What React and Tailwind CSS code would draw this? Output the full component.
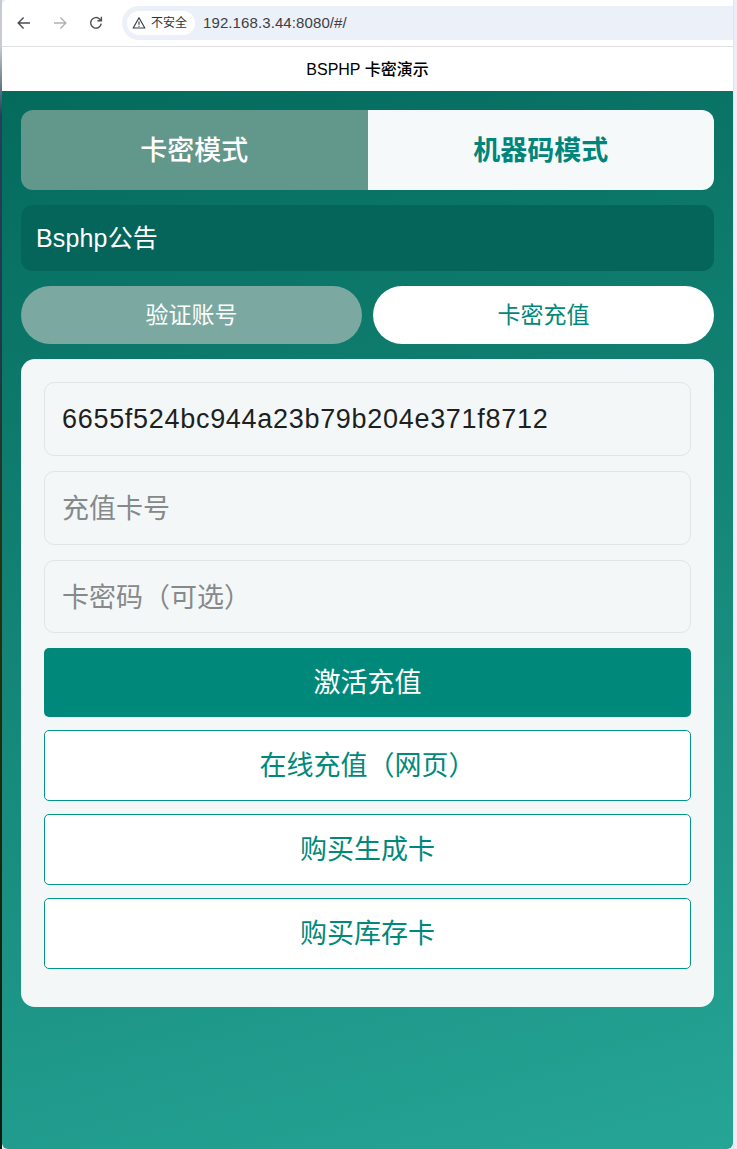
import React from "react";

const stack = "font-['Liberation_Sans','Noto_Sans_CJK_SC',sans-serif]";

function Back() {
  return (
    <svg width="16" height="16" viewBox="0 0 16 16" fill="none" stroke="#4a4d51" strokeWidth="1.4">
      <path d="M14 8H2.6M7.6 2.6 2.2 8l5.4 5.4" />
    </svg>
  );
}
function Forward() {
  return (
    <svg width="16" height="16" viewBox="0 0 16 16" fill="none" stroke="#b0b2b5" strokeWidth="1.4">
      <path d="M2 8h11.4M8.4 2.6 13.8 8l-5.4 5.4" />
    </svg>
  );
}
function Reload() {
  return (
    <svg width="16" height="16" viewBox="0 0 16 16" fill="none" stroke="#4a4d51" strokeWidth="1.4">
      <path d="M13.2 8.6A5.3 5.3 0 1 1 11.6 4l1.6 1.6" />
      <path d="M13.4 1.8v4h-4" />
    </svg>
  );
}
function Warn() {
  return (
    <svg width="14" height="14" viewBox="0 0 14 14" fill="none" stroke="#3c3f43" strokeWidth="1.2">
      <path d="M7 1.8 1.2 12h11.6L7 1.8Z" strokeLinejoin="round" />
      <path d="M7 5.6v3.2M7 9.8v1" />
    </svg>
  );
}

function Outline({ children }) {
  return (
    <button className="flex h-[71px] w-full items-center justify-center rounded-[5px] border border-[#009688] bg-white pt-[2px] text-[27px] text-[#00897b]">
      {children}
    </button>
  );
}

export default function App() {
  return (
    <div className={`flex h-[1149px] w-[737px] overflow-hidden bg-[#e9eef9] ${stack}`}>
      <div className="h-full w-[2px] shrink-0 bg-[linear-gradient(#c8ccd0_0%,#c8ccd0_4%,#22405a_10%,#1c3a4a_30%,#2a2f10_50%,#0e1a0e_100%)]" />
      <div className="flex h-full w-[731px] shrink-0 flex-col overflow-hidden rounded-tl-[6px] rounded-b-[6px] bg-white">
        <div className="flex h-[47px] shrink-0 items-center border-b border-[#dedfe1] bg-white pl-[14px]">
          <div className="flex w-[106px] items-center gap-[20px]">
            <Back />
            <Forward />
            <Reload />
          </div>
          <div className="flex h-[34px] flex-1 items-center rounded-l-[17px] bg-[#ecf0f9] pl-[5px]">
            <div className="flex h-[24px] items-center gap-[5px] rounded-[12px] bg-white pl-[5px] pr-[8px] text-[12px] text-[#303336]">
              <Warn />
              <span>不安全</span>
            </div>
            <span className="ml-[8px] text-[15px] tracking-[0.1px] text-[#3c4043]">192.168.3.44:8080/#/</span>
          </div>
        </div>
        <div className="flex h-[44px] shrink-0 items-center justify-center bg-white pt-[1px] text-[16px] font-medium text-black">
          BSPHP 卡密演示
        </div>
        <div className="flex flex-1 flex-col bg-[linear-gradient(165deg,#046a5c_0%,#26a596_100%)] px-[19px] pt-[19px]">
          <div className="flex h-[80px] shrink-0 overflow-hidden rounded-[12px]">
            <div className="flex w-1/2 items-center justify-center bg-[#62978c] pt-[2px] text-[27px] font-medium text-white">
              卡密模式
            </div>
            <div className="flex w-1/2 items-center justify-center bg-[#f6f9f9] pt-[2px] text-[27px] font-bold text-[#00857a]">
              机器码模式
            </div>
          </div>
          <div className="mt-[15px] flex h-[66px] shrink-0 items-center rounded-[12px] bg-[#05655a] px-[15px] pt-[2px] text-[25px] tracking-[0.15px] text-white">
            Bsphp公告
          </div>
          <div className="mt-[15px] flex h-[58px] shrink-0 gap-[11px]">
            <div className="flex flex-1 items-center justify-center rounded-[29px] bg-[#7ba9a1] text-[23px] text-white">
              验证账号
            </div>
            <div className="flex flex-1 items-center justify-center rounded-[29px] bg-white text-[23px] text-[#00897b]">
              卡密充值
            </div>
          </div>
          <div className="mt-[15px] flex h-[648px] shrink-0 flex-col rounded-[14px] bg-[#f4f7f8] px-[23px] pt-[23px]">
            <div className="flex flex-col gap-[15px]">
              <input
                readOnly
                value="6655f524bc944a23b79b204e371f8712"
                className="h-[74px] w-full rounded-[10px] border border-[#e1e5e6] bg-[#f4f7f8] px-[17px] text-[27px] tracking-[0.7px] text-[#1d1f20] outline-none"
              />
              <input
                readOnly
                placeholder="充值卡号"
                className="h-[74px] w-full rounded-[10px] border border-[#e1e5e6] bg-[#f4f7f8] px-[17px] pt-[2px] text-[27px] text-[#1d1f20] outline-none placeholder:text-[#85898a]"
              />
              <input
                readOnly
                placeholder="卡密码（可选）"
                className="h-[73px] w-full rounded-[10px] border border-[#e1e5e6] bg-[#f4f7f8] px-[17px] pt-[3px] text-[27px] text-[#1d1f20] outline-none placeholder:text-[#85898a]"
              />
            </div>
            <button className="mt-[15px] flex h-[69px] w-full shrink-0 items-center justify-center rounded-[5px] bg-[#00897b] pt-[2px] text-[27px] text-white">
              激活充值
            </button>
            <div className="mt-[13px] flex flex-col gap-[13px]">
              <Outline>在线充值（网页）</Outline>
              <Outline>购买生成卡</Outline>
              <Outline>购买库存卡</Outline>
            </div>
          </div>
        </div>
      </div>
      <div className="h-full flex-1 border-l border-[#dde3f0] bg-[#e9eef9]" />
    </div>
  );
}
